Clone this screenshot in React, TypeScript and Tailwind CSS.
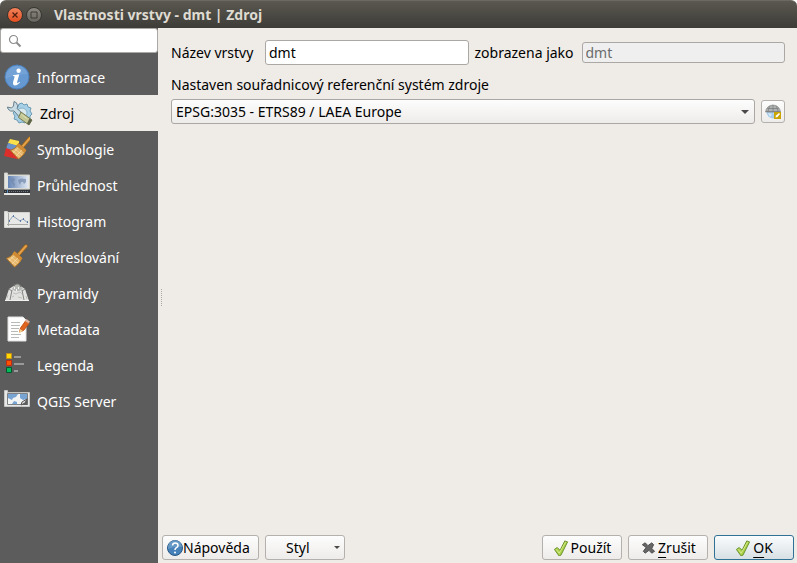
import type { ReactNode } from "react";

function InfoIcon() {
  return (
    <svg viewBox="0 0 26 26" className="size-[26px]" aria-hidden="true">
      <circle cx="13" cy="13" r="12" fill="#6699d2" stroke="#4a7fbd" />
      <path d="M1.5 13A11.5 11.5 0 0 1 24 10Q12 10 1.5 15Z" fill="#86b0de" opacity=".4" />
      <circle cx="14.6" cy="6.8" r="2.2" fill="#fff" />
      <path d="M9 11.2l6.3-.9-2.3 8.2q-.3 1.2 2.6-.8l.4.7q-3.2 3.4-5.6 3-2-.5-1.4-2.8l1.6-5.8q.2-.9-1.7-.8z" fill="#fff" />
    </svg>
  );
}

function SourceIcon() {
  return (
    <svg viewBox="0 0 26 26" className="size-[26px]" aria-hidden="true">
      <path d="M12 4l3-1 2 2 3-1 1 3 3 1-1 3 2 3-2 2 0 3-3 1-2 3-3-1-3 1-2-3-3-1 1-3-2-3 2-2 0-3 3-1z" fill="#a6cfe8" stroke="#6c9bb4" />
      <circle cx="15" cy="13" r="5" fill="#dbe9ed" stroke="#86b3c8" />
      <path d="M7 1.500q3 .5 3.500 4 .3 1.500-.5 3l5 4.500-3 3.500-5-5.500q-4 1-6-2l-.5-2 4 1 2-2z" fill="#c9dce4" stroke="#66808d" />
      <path d="M14 12L25 20l-3 5-10.500-7.500z" fill="#c3c793" stroke="#777b52" />
      <path d="M22.500 18.500l2.500 1.500-3 5-2-1.500z" fill="#5e6249" />
      <path d="M14.500 14.500l6 4.500" stroke="#dfe0b6" />
    </svg>
  );
}

function BroomShape() {
  return (
    <>
      <path d="M22 3l-7 8" stroke="#9c631e" strokeWidth="3.500" strokeLinecap="round" />
      <path d="M22 3l-7 8" stroke="#e5a147" strokeWidth="2" strokeLinecap="round" />
      <path d="M2.500 15.500Q8 14 10.500 8.500l7.500 6.500q-2 5.500-7.500 9z" fill="#e6b66b" stroke="#b27628" />
      <path d="M10.500 8.500l7.500 6.500-1.500 3-8-7z" fill="#d18b34" />
      <path d="M5 16l7 6M7 14l7 6M5 18l5-5M8 21l6-6" stroke="#f5d6a0" strokeWidth=".8" />
    </>
  );
}

function SymbologyIcon() {
  return (
    <svg viewBox="0 0 26 26" className="size-[26px]" aria-hidden="true">
      <path d="M6 3l9 2 0 6-11-4z" fill="#fbe04b" />
      <path d="M4 7l11 3-3 7-10-4z" fill="#6a92c8" />
      <path d="M2 12l9 3 4 6-2 2-13-3z" fill="#dc2f2b" />
      <g transform="translate(4 -1)"><BroomShape /></g>
    </svg>
  );
}

function TransparencyIcon() {
  return (
    <svg viewBox="0 0 26 26" className="size-[26px]" aria-hidden="true">
      <defs>
        <linearGradient id="map-fade" x1="0" y1="0" x2="1" y2="0">
          <stop stopColor="#6585b6" /><stop offset="1" stopColor="#dfe7f2" />
        </linearGradient>
      </defs>
      <path d="M.5 1h3v2h22v14H.5z" fill="#e4e4e1" stroke="#cdcdc8" />
      <path d="M4 4h20v12H4z" fill="url(#map-fade)" />
      <path d="M6 7l4-1 1 2-2 2 2 2-1 3-2-4zM14 8l3-1.500 5 .5 0 3-2 2-1-2-2 0-1 3-1.500-3z" fill="#7288aa" opacity=".7" />
      <path d="M0 18h26v3H0z" fill="#31353a" />
      <path d="M1 19.500h24" stroke="#73797f" strokeDasharray="1 1" />
      <path d="M0 21h26v2H0z" fill="#e6e6e4" /><path d="M3 18h1v3H3z" fill="#548bc1" />
    </svg>
  );
}

function HistogramIcon() {
  return (
    <svg viewBox="0 0 26 26" className="size-[26px]" aria-hidden="true">
      <path d="M.5 3.500h3v1h22v15H.5z" fill="#e8e8e6" stroke="#d2d2cf" />
      <path d="M4.500 5v13M3 16.500h21" stroke="#a9a9a5" />
      <path d="M5 13l4-5 7 5 3-2 5 4" fill="none" stroke="#7890ae" strokeWidth=".8" />
      <path d="M5 13h1M9 8h1M16 13h1M19 11h1M23 14h1" stroke="#3e669c" strokeWidth="1.500" />
    </svg>
  );
}

function RenderingIcon() {
  return <svg viewBox="0 0 26 26" className="size-[26px]" aria-hidden="true"><g transform="translate(0 -1)"><BroomShape /></g></svg>;
}

function PyramidIcon() {
  return (
    <svg viewBox="0 0 26 26" className="size-[26px]" aria-hidden="true">
      <path d="M5 9l6-4h4l6 4 4 12H1z" fill="#e2e2e0" />
      <path d="M8 9l3-5h4l4 5-4 2h-4z" fill="#b5b7b3" />
      <path d="M10 6l2-2h3l2 3" fill="none" stroke="#6d6f6b" />
      <path d="M5 9l3 2M21 9l-3 2M8 10l-2 10M18 10l2 10" fill="none" stroke="#858782" />
      <path d="M9 13l3 1 4-2 2 2M8 17l2-1M14 17l4 1M3 18l1-3M22 16l1 3" fill="none" stroke="#bdbdb9" />
      <path d="M10 8h1M14 8h1M12 10h1" stroke="#f4f4f2" strokeWidth="2" />
      <path d="M1 20.500h24" stroke="#f1f1ef" />
    </svg>
  );
}

function MetadataIcon() {
  return (
    <svg viewBox="0 0 26 26" className="size-[26px]" aria-hidden="true">
      <path d="M4 1h15l3 3v21H4z" fill="#fff" stroke="#e0e0df" />
      <path d="M7 6.500h9M7 9.500h9M7 12.500h8M7 15.500h7M7 18.500h10M7 21.500h8" stroke="#b8bab6" />
      <path d="M15.500 16l1-4 5-7 3.500 2.500-5.500 7z" fill="#e0661f" stroke="#c4541a" />
      <path d="M15 17l1-4 3 2z" fill="#f3d192" /><path d="M21 5l1.500-2 3.500 2.500-1.500 2z" fill="#deb29c" />
    </svg>
  );
}

function LegendIcon() {
  return (
    <svg viewBox="0 0 26 26" className="size-[26px]" aria-hidden="true">
      <path d="M10 5h7M10 12h10M10 19h4" stroke="#999" strokeWidth="2" />
      <path d="M2.500 1.500h5v5h-5z" fill="#ffd900" stroke="#c58e16" />
      <path d="M2.500 8.500h5v5h-5z" fill="#ff5200" stroke="#bd2c12" />
      <path d="M2.500 15.500h5v5h-5z" fill="#00ba59" stroke="#06552e" />
    </svg>
  );
}

function ServerIcon() {
  return (
    <svg viewBox="0 0 26 26" className="size-[26px]" aria-hidden="true">
      <path d="M.5 2.500h3v2h22v14H.5z" fill="#e8e8e6" stroke="#c5c5c4" />
      <path d="M3.500 5.500h20v11h-20z" fill="#f2f3f3" stroke="#7d8083" />
      <path d="M4 6h10l-2 3-3 1-1 2-4-2zM16 6h7v5l-4 1-3-2zM8 16l2-3 3 1v2z" fill="#78a4d4" />
      <path d="M23.500 10v7h-6z" fill="#5c5e60" /><path d="M17 17l1-3 5-3-2 4z" fill="#e1e1df" stroke="#555" />
    </svg>
  );
}

function CheckIcon() {
  return (
    <svg viewBox="1 0 16 17" className="size-4" aria-hidden="true">
      <path d="M2 10l3-2 3 3 5-10 3 1-7 14-2 1z" fill="#afd24c" stroke="#618d28" strokeLinejoin="round" />
      <path d="M4 10l3 4 7-12" fill="none" stroke="#d4e98c" />
    </svg>
  );
}

function CancelIcon() {
  return (
    <svg viewBox="1 0 16 17" className="size-4" aria-hidden="true">
      <path d="M3 5l3-2 3 3 4-3 2 2-2 4 3 3-3 2-3-3-4 3-2-2 3-4z" fill="#666" stroke="#4c4c4c" strokeLinejoin="round" />
    </svg>
  );
}

function HelpIcon() {
  return (
    <svg viewBox="1 1 16 16" className="size-4" aria-hidden="true">
      <circle cx="9" cy="9" r="7.500" fill="#4681b9" stroke="#285884" />
      <path d="M2 8a7 7 0 0 1 14 0Q9 7 2 10Z" fill="#73a3cc" opacity=".7" />
      <path d="M6.500 6.500q.2-2.500 2.700-2.500 2.800 0 2.800 2.400 0 1.400-1.600 2.300Q9 9.500 9 11" fill="none" stroke="#fff" strokeWidth="1.500" />
      <circle cx="9" cy="13.500" r="1" fill="#fff" />
    </svg>
  );
}

function ProjectionIcon() {
  return (
    <svg viewBox="0 0 16 16" className="size-4 shrink-0" aria-hidden="true">
      <circle cx="8" cy="8" r="6.500" fill="#a5cbec" />
      <path d="M.5 8q1-6.500 7.500-7 6.500.500 7.500 7z" fill="#b0b2b1" stroke="#8c8e8d" strokeWidth=".8" />
      <path d="M1 7.500h14M2.500 4.500h11M8 1v7M5 2q-2 3-2 6M11 2q2 3 2 6" fill="none" stroke="#777a7c" strokeWidth=".7" />
      <path d="M3 9l4 1-2 3zM8 9h2v3z" fill="#d9eaf6" />
      <path d="M9 8h7v7H9z" fill="#c9a300" /><path d="M10.500 13.500l.5-2 3-2.500 1 1-2.500 3z" fill="#fff" />
    </svg>
  );
}

const pages: { label: string; icon: ReactNode }[] = [
  { label: "Informace", icon: <InfoIcon /> },
  { label: "Zdroj", icon: <SourceIcon /> },
  { label: "Symbologie", icon: <SymbologyIcon /> },
  { label: "Průhlednost", icon: <TransparencyIcon /> },
  { label: "Histogram", icon: <HistogramIcon /> },
  { label: "Vykreslování", icon: <RenderingIcon /> },
  { label: "Pyramidy", icon: <PyramidIcon /> },
  { label: "Metadata", icon: <MetadataIcon /> },
  { label: "Legenda", icon: <LegendIcon /> },
  { label: "QGIS Server", icon: <ServerIcon /> },
];

const buttonStyle =
  "flex h-[25px] items-center rounded-[3px] border border-[#b3b0ad] bg-linear-to-b from-[#fdfdfd] to-[#eeecea]";

function TitleBar() {
  return (
    <header className="flex h-7 shrink-0 items-center rounded-t-md border-t border-[#6b6a62] bg-linear-to-b from-[#5a5850] to-[#3d3c37] px-[7px]">
      <button aria-label="Zavřít" className="mr-[3px] flex size-4 items-center justify-center rounded-full border border-[#38342f] bg-linear-to-b from-[#f4825a] to-[#e34e1c]">
        <svg viewBox="0 0 8 8" className="size-2 shrink-0" aria-hidden="true"><path d="M1.500 1.500l5 5M6.500 1.500l-5 5" stroke="#51210f" strokeWidth="1.300" /></svg>
      </button>
      <button aria-label="Maximalizovat" className="flex size-4 items-center justify-center rounded-full border border-[#373631] bg-linear-to-b from-[#8b8981] to-[#67655e]">
        <svg viewBox="0 0 8 8" className="size-2 shrink-0" aria-hidden="true"><path d="M1 1h6v6H1z" fill="none" stroke="#3b3a35" /></svg>
      </button>
      <h1 className="ml-3 text-sm font-bold text-[#dfdbd2]">Vlastnosti vrstvy - dmt | Zdroj</h1>
    </header>
  );
}

function Sidebar() {
  return (
    <aside className="w-[158px] shrink-0 bg-[#5c5c5c]">
      <label className="flex h-[25px] items-center rounded-[3px] border border-[#aaa7a4] bg-white pl-[7px]">
        <svg viewBox="0 0 14 14" className="size-[14px] shrink-0" aria-hidden="true">
          <circle cx="5.500" cy="5.500" r="4" fill="none" stroke="#8b8b8b" strokeWidth="1.200" />
          <path d="M8.500 8.500l4 4" stroke="#8b8b8b" strokeWidth="2" />
        </svg>
        <input type="search" aria-label="Hledat" className="min-w-0 flex-1 bg-transparent px-1 outline-none" />
      </label>
      <nav className="mt-1.5 flex flex-col">
        {pages.map(({ label, icon }) => (
          <button
            key={label}
            className={
              label === "Zdroj"
                ? "flex h-9 items-center gap-[7px] bg-[#efebe7] pl-[7px] text-black"
                : "flex h-9 items-center gap-[7px] pl-1 text-white"
            }
          >
            {icon}
            <span className="pt-0.5">{label}</span>
          </button>
        ))}
      </nav>
    </aside>
  );
}

function SourceForm() {
  return (
    <section className="min-w-0 flex-1 pr-3 pt-3">
      <div className="flex items-center gap-1.5">
        <label htmlFor="layer-name" className="w-[88px] shrink-0 whitespace-nowrap">Název vrstvy</label>
        <input id="layer-name" defaultValue="dmt" className="h-[25px] min-w-0 flex-1 rounded-[3px] border border-[#aaa7a4] bg-white px-[3px] outline-none" />
        <label htmlFor="display-name" className="w-[101px] shrink-0 whitespace-nowrap">zobrazena jako</label>
        <input id="display-name" defaultValue="dmt" readOnly className="h-[21px] min-w-0 flex-1 rounded-[3px] border border-[#aaa7a4] bg-[#efefef] px-[3px] text-[#6b6b6b] outline-none" />
      </div>
      <label htmlFor="crs" className="mt-2.5 block leading-5">Nastaven souřadnicový referenční systém zdroje</label>
      <div className="mt-1 flex items-center gap-1.5">
        <div className="relative min-w-0 flex-1">
          <select id="crs" className="block h-[25px] w-full appearance-none rounded-[3px] border border-[#aaa7a4] bg-linear-to-b from-[#fdfdfd] to-[#eeecea] px-1 outline-none">
            <option>EPSG:3035 - ETRS89 / LAEA Europe</option>
          </select>
          <svg viewBox="0 0 8 4" className="pointer-events-none absolute right-1.5 top-[11px] h-1 w-2" aria-hidden="true"><path d="M0 0h8L4 4z" fill="#4a4a4a" /></svg>
        </div>
        <button aria-label="Vybrat souřadnicový systém" className="flex h-[23px] w-6 shrink-0 items-center justify-center rounded-[3px] border border-[#b3b0ad] bg-linear-to-b from-[#fdfdfd] to-[#eeecea]">
          <ProjectionIcon />
        </button>
      </div>
    </section>
  );
}

export default function App() {
  return (
    <div className="bg-white font-['Noto_Sans','Open_Sans',sans-serif] text-sm text-black">
      <div className="flex min-h-screen flex-col">
        <TitleBar />
        <div className="flex flex-1 bg-[#efebe7]">
          <Sidebar />
          <div className="flex min-w-0 flex-1 flex-col pl-[1px]">
            <div className="flex flex-1 gap-[9px]">
              <div className="flex w-[3px] shrink-0 items-center justify-end pt-[32px]" aria-hidden="true">
                <span className="h-[17px] border-l border-dotted border-[#aaa7a4]" />
              </div>
              <SourceForm />
            </div>
            <footer className="flex gap-1.5 px-[3px] pb-[3px]">
              <button className={`${buttonStyle} w-[97px] pl-1`}><HelpIcon />Nápověda</button>
              <button className={`${buttonStyle} w-20 justify-between pl-5 pr-1`}>
                Styl
                <svg viewBox="0 0 6 3" className="h-[3px] w-1.5" aria-hidden="true"><path d="M0 0h6L3 3z" fill="#4a4a4a" /></svg>
              </button>
              <button className={`${buttonStyle} ml-auto w-20 justify-center gap-0.5`}><CheckIcon />Použít</button>
              <button className={`${buttonStyle} w-20 justify-center gap-0.5`}><CancelIcon /><span><u className="underline-offset-4">Z</u>rušit</span></button>
              <button className="flex h-[25px] w-20 items-center justify-center gap-0.5 rounded-[3px] border border-[#2f7296] bg-linear-to-b from-[#fafcfd] to-[#d8e0e4]">
                <CheckIcon /><span><u className="underline-offset-4">O</u>K</span>
              </button>
            </footer>
          </div>
        </div>
      </div>
    </div>
  );
}
